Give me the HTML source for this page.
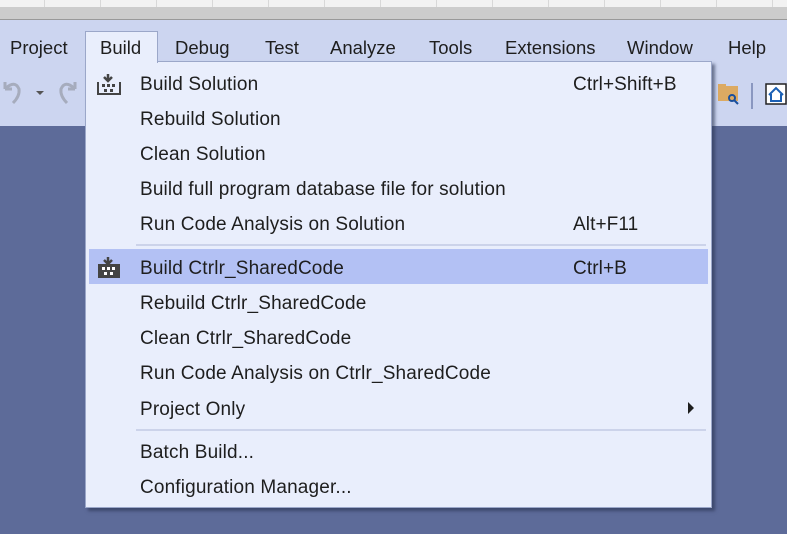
<!DOCTYPE html>
<html><head><style>
body{margin:0;width:787px;height:534px;overflow:hidden;background:#5d6b99;position:relative;font-family:"Liberation Sans",sans-serif;}
.abs{position:absolute}
.strip{left:0;top:0;width:787px;height:7px;background:#f2f2f2;background-image:repeating-linear-gradient(90deg,transparent 0 44px,#d8d8d8 44px 45px,transparent 45px 56px);}
.gray{left:0;top:7px;width:787px;height:12px;background:#cccccc;border-bottom:1px solid #999}
.bar{left:0;top:20px;width:787px;height:106px;background:#ccd5f0}
.mi{top:37px;font-size:18.5px;color:#1e1e1e}
.tab{left:85px;top:31px;width:71px;height:31px;background:#e9eefc;border:1px solid #9ba7c9;border-bottom:none;z-index:3}
.menu{left:85px;top:61px;width:625px;height:445px;background:#e9eefc;border:1px solid #9ba7c9;box-shadow:3px 3px 3px rgba(40,50,80,.6);z-index:2}
.row{position:absolute;left:54px;font-size:19px;letter-spacing:0.15px;color:#1e1e1e;height:35px;line-height:35px}
.sc{position:absolute;left:487px;font-size:19px;letter-spacing:0.1px;color:#1e1e1e;line-height:35px}
.sep{position:absolute;left:50px;width:570px;height:2px;background:#ccd3ea}
.hl{position:absolute;left:3px;top:187px;width:619px;height:35px;background:#b3c1f4}
</style></head><body>
<div class="abs strip"></div><div class="abs gray"></div><div class="abs bar"></div>
<div class="abs mi" style="left:10px">Project</div>
<div class="abs mi" style="left:175px">Debug</div>
<div class="abs mi" style="left:265px">Test</div>
<div class="abs mi" style="left:330px">Analyze</div>
<div class="abs mi" style="left:429px">Tools</div>
<div class="abs mi" style="left:505px">Extensions</div>
<div class="abs mi" style="left:627px">Window</div>
<div class="abs mi" style="left:728px">Help</div>
<svg class="abs" style="left:0;top:80px" width="85" height="30"><path d="M5 9 L5 2 M5 9 L12 9 M6 8 Q15 0 19 9 Q20 16 13 23" stroke="#a6acbd" stroke-width="3" fill="none"/><path d="M36 11 L44 11 L40 15Z" fill="#555"/><path d="M75 9 L75 2 M75 9 L68 9 M74 8 Q65 0 61 9 Q60 16 67 23" stroke="#a6acbd" stroke-width="3" fill="none"/></svg>
<svg class="abs" style="left:717px;top:83px" width="70" height="30"><rect x="1" y="3" width="20" height="15" fill="#dcaa62"/><rect x="1" y="1" width="8" height="4" fill="#dcaa62"/><circle cx="15" cy="15" r="3" stroke="#1a4f9c" stroke-width="2" fill="none"/><path d="M17 17 L21 21" stroke="#1a4f9c" stroke-width="2"/><rect x="34" y="-4" width="2" height="30" fill="#8a97c0"/><rect x="49" y="1" width="20" height="20" fill="#fff" stroke="#222" stroke-width="1.5"/><path d="M52 12 L59 5 L66 12 M54 11 L54 18 L64 18 L64 11" stroke="#1a5fb4" stroke-width="2" fill="none"/></svg>
<div class="abs tab"><div style="position:absolute;left:14px;top:5px;font-size:18.5px;color:#1e1e1e">Build</div></div>
<div class="abs menu">
<div class="hl"></div>
<svg style="position:absolute;left:11px;top:12px" width="25" height="22"><path d="M11 0 L11 6 M7 3 L11 7 L15 3" stroke="#444" stroke-width="2.5" fill="none"/><path d="M1 8 L1 20 L23 20 L23 8" stroke="#444" stroke-width="2" fill="none"/><g fill="#444"><rect x="5" y="10" width="3" height="3"/><rect x="10" y="10" width="3" height="3"/><rect x="15" y="10" width="3" height="3"/><rect x="7" y="15" width="3" height="3"/><rect x="13" y="15" width="3" height="3"/></g></svg>
<svg style="position:absolute;left:11px;top:195px" width="25" height="22"><path d="M11 0 L11 6 M7 3 L11 7 L15 3" stroke="#444" stroke-width="2.5" fill="none"/><rect x="1" y="7" width="22" height="14" fill="#444"/><g fill="#fff"><rect x="5" y="10" width="3" height="3"/><rect x="10" y="10" width="3" height="3"/><rect x="15" y="10" width="3" height="3"/><rect x="7" y="15" width="3" height="3"/><rect x="13" y="15" width="3" height="3"/></g></svg>
<div class="row" style="top:5px">Build Solution</div><div class="sc" style="top:5px">Ctrl+Shift+B</div>
<div class="row" style="top:40px">Rebuild Solution</div>
<div class="row" style="top:75px">Clean Solution</div>
<div class="row" style="top:110px">Build full program database file for solution</div>
<div class="row" style="top:145px">Run Code Analysis on Solution</div><div class="sc" style="top:145px">Alt+F11</div>
<div class="sep" style="top:182px"></div>
<div class="row" style="top:189px">Build Ctrlr_SharedCode</div><div class="sc" style="top:189px">Ctrl+B</div>
<div class="row" style="top:224px">Rebuild Ctrlr_SharedCode</div>
<div class="row" style="top:259px">Clean Ctrlr_SharedCode</div>
<div class="row" style="top:294px">Run Code Analysis on Ctrlr_SharedCode</div>
<div class="row" style="top:330px">Project Only</div>
<svg style="position:absolute;left:602px;top:340px" width="8" height="12"><path d="M0 0 L6 6 L0 12Z" fill="#1e1e1e"/></svg>
<div class="sep" style="top:367px"></div>
<div class="row" style="top:373px">Batch Build...</div>
<div class="row" style="top:408px">Configuration Manager...</div>
</div>
</body></html>
